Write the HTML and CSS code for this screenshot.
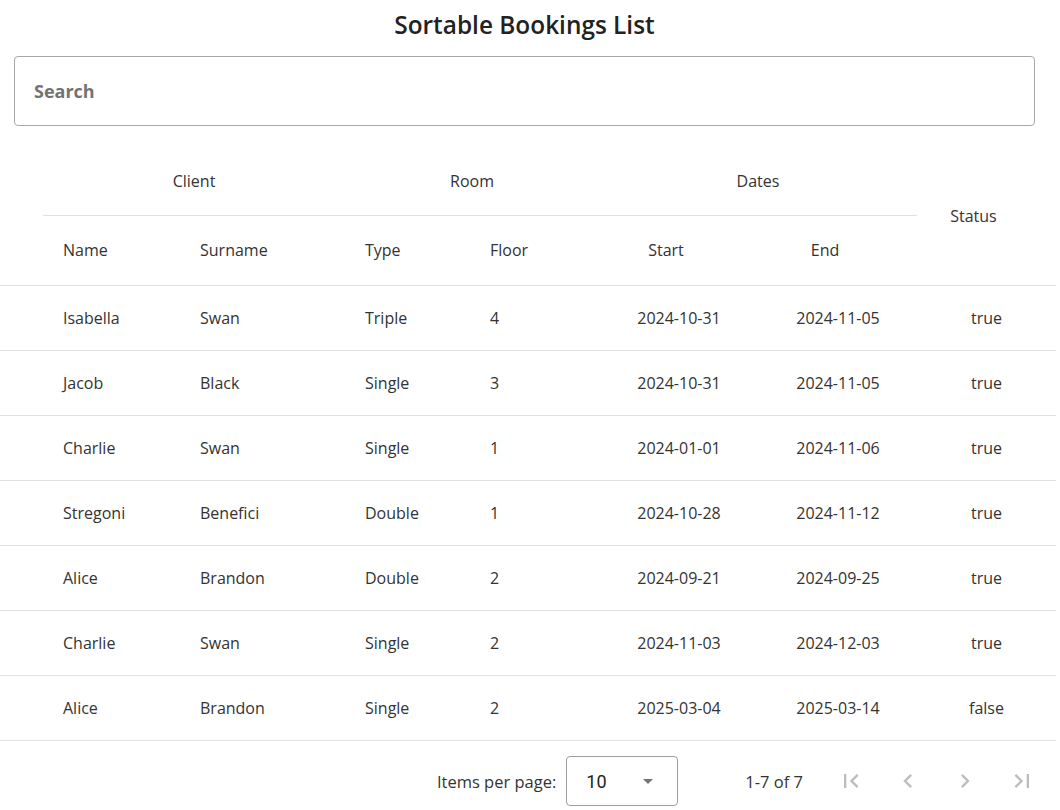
FILE: index.html
```html
<!DOCTYPE html>
<html lang="en">
<head>
<meta charset="utf-8">
<title>Sortable Bookings List</title>
<link rel="stylesheet" href="styles.css">
</head>
<body>
<div class="page">
  <h1 class="title">Sortable Bookings List</h1>
  <div class="search"><span class="search-label">Search</span></div>
  <table class="bookings">
    <colgroup>
      <col class="c-spacer"><col class="c-name"><col class="c-surname"><col class="c-type"><col class="c-floor"><col class="c-start"><col class="c-end"><col class="c-status">
    </colgroup>
    <thead>
      <tr class="group-row">
        <th class="spacer" rowspan="2"></th>
        <th class="group" colspan="2">Client</th>
        <th class="group" colspan="2">Room</th>
        <th class="group" colspan="2">Dates</th>
        <th class="status-h" rowspan="2">Status</th>
      </tr>
      <tr class="col-row">
        <th class="left">Name</th>
        <th class="left">Surname</th>
        <th class="left">Type</th>
        <th class="left">Floor</th>
        <th class="center">Start</th>
        <th class="center">End</th>
      </tr>
    </thead>
    <tbody>
      <tr><td></td><td>Isabella</td><td>Swan</td><td>Triple</td><td>4</td><td class="c">2024-10-31</td><td class="c">2024-11-05</td><td class="c">true</td></tr>
      <tr><td></td><td>Jacob</td><td>Black</td><td>Single</td><td>3</td><td class="c">2024-10-31</td><td class="c">2024-11-05</td><td class="c">true</td></tr>
      <tr><td></td><td>Charlie</td><td>Swan</td><td>Single</td><td>1</td><td class="c">2024-01-01</td><td class="c">2024-11-06</td><td class="c">true</td></tr>
      <tr><td></td><td>Stregoni</td><td>Benefici</td><td>Double</td><td>1</td><td class="c">2024-10-28</td><td class="c">2024-11-12</td><td class="c">true</td></tr>
      <tr><td></td><td>Alice</td><td>Brandon</td><td>Double</td><td>2</td><td class="c">2024-09-21</td><td class="c">2024-09-25</td><td class="c">true</td></tr>
      <tr><td></td><td>Charlie</td><td>Swan</td><td>Single</td><td>2</td><td class="c">2024-11-03</td><td class="c">2024-12-03</td><td class="c">true</td></tr>
      <tr><td></td><td>Alice</td><td>Brandon</td><td>Single</td><td>2</td><td class="c">2025-03-04</td><td class="c">2025-03-14</td><td class="c">false</td></tr>
    </tbody>
  </table>
  <div class="paginator">
    <span class="pg-label">Items per page:</span>
    <div class="pg-select"><span class="pg-value">10</span><span class="pg-arrow"></span></div>
    <span class="pg-range">1-7 of 7</span>
    <div class="pg-buttons">
      <button class="pg-btn" aria-label="First page"><svg viewBox="0 0 24 24"><path d="M18.41 16.59L13.82 12l4.59-4.59L17 6l-6 6 6 6zM6 6h2v12H6z"/></svg></button>
      <button class="pg-btn" aria-label="Previous page"><svg viewBox="0 0 24 24"><path d="M15.41 7.41L14 6l-6 6 6 6 1.41-1.41L10.83 12z"/></svg></button>
      <button class="pg-btn" aria-label="Next page"><svg viewBox="0 0 24 24"><path d="M10 6L8.59 7.41 13.17 12l-4.58 4.59L10 18l6-6z"/></svg></button>
      <button class="pg-btn" aria-label="Last page"><svg viewBox="0 0 24 24"><path d="M5.59 7.41L10.18 12l-4.59 4.59L7 18l6-6-6-6zM16 6h2v12h-2z"/></svg></button>
    </div>
  </div>
</div>
</body>
</html>
```

FILE: styles.css
```css
html, body {
  margin: 0;
  padding: 0;
  background: #fff;
}
body {
  font-family: "Open Sans", "Noto Sans", sans-serif;
  color: #333;
}
.page {
  width: 1056px;
}
.title {
  margin: 0 21px 15px 14px;
  padding-top: 9px;
  font-size: 24.4px;
  line-height: 32px;
  font-weight: 600;
  color: #222;
  text-align: center;
}
.search {
  margin: 0 21px 22px 14px;
  height: 68px;
  border: 1px solid #a8a8a8;
  border-radius: 4px;
  display: flex;
  align-items: center;
  padding-left: 19px;
}
.search-label {
  font-size: 18px;
  font-weight: 700;
  color: #737373;
}
.bookings {
  width: 1056px;
  table-layout: fixed;
  border-collapse: collapse;
  font-size: 16px;
}
.c-spacer { width: 43px; }
.c-name { width: 137px; }
.c-surname { width: 165px; }
.c-type { width: 125px; }
.c-floor { width: 129px; }
.c-start { width: 160px; }
.c-end { width: 158px; }
.c-status { width: 139px; }
th {
  font-weight: 400;
  color: #333;
  padding: 0;
}
.group-row th {
  height: 65px;
  padding-bottom: 2px;
  text-align: center;
}
.group-row th.group {
  border-bottom: 1px solid #e0e0e0;
}
.status-h {
  padding-right: 26px !important;
  border-bottom: 1px solid #e0e0e0;
}
.col-row th {
  height: 67px;
  padding-bottom: 2px;
  border-bottom: 1px solid #e0e0e0;
}
.spacer {
  border-bottom: 1px solid #e0e0e0;
}
th.left {
  text-align: left;
  padding-left: 20px;
}
th.center {
  text-align: center;
  padding-right: 26px;
}
td {
  height: 64px;
  padding: 0 0 0 20px;
  border-bottom: 1px solid #e0e0e0;
  color: #333;
}
td.c {
  text-align: center;
  padding: 0;
}
.paginator {
  display: flex;
  align-items: center;
  justify-content: flex-end;
  padding: 15px 14px 0 0;
  font-size: 16.5px;
}
.pg-label {
  margin-right: 10px;
}
.pg-select {
  height: 48px;
  border: 1px solid #9e9e9e;
  border-radius: 4px;
  display: flex;
  align-items: center;
  justify-content: space-between;
  padding: 0 24px 0 19px;
  box-sizing: content-box;
  width: 67px;
  font-family: Roboto, sans-serif;
  font-size: 18px;
  color: #222;
}
.pg-arrow {
  width: 0;
  height: 0;
  border-left: 5px solid transparent;
  border-right: 5px solid transparent;
  border-top: 5px solid #757575;
}
.pg-range {
  margin-left: 67px;
  margin-right: 28px;
}
.pg-buttons {
  display: flex;
  gap: 17px;
}
.pg-btn {
  width: 40px;
  height: 40px;
  padding: 0;
  border: 0;
  background: none;
  display: flex;
  align-items: center;
  justify-content: center;
}
.pg-btn svg {
  width: 28px;
  height: 28px;
  fill: #bdbdbd;
}
```
